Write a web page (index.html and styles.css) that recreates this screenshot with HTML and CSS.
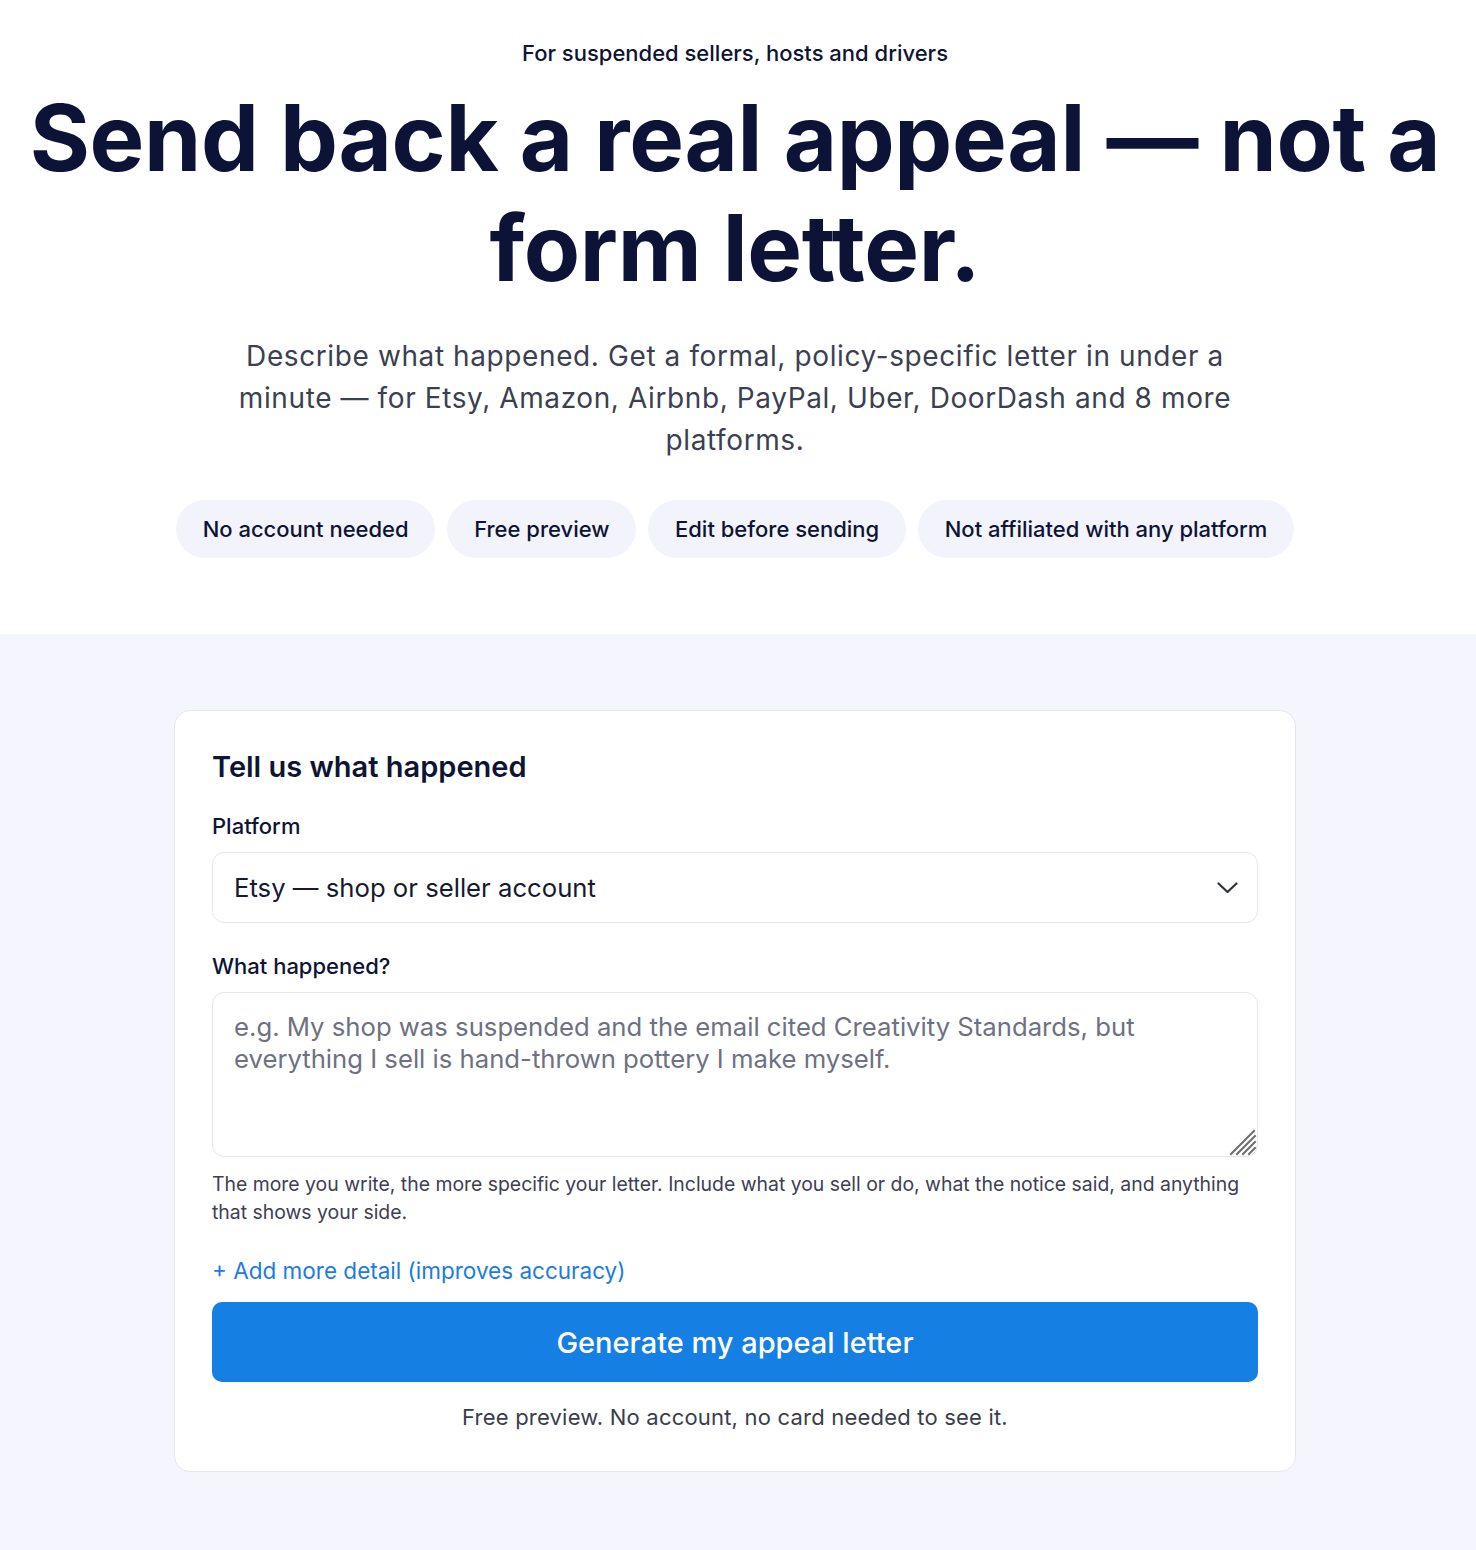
FILE: index.html
```html
<!DOCTYPE html>
<html lang="en">
<head>
    <meta charset="UTF-8">
    <meta name="viewport" content="width=device-width, initial-scale=1.0">
    <title>Appeal Letter Generator</title>
    <link rel="stylesheet" href="styles.css">
</head>
<body>

<section class="hero">
    <p class="eyebrow">For suspended sellers, hosts and drivers</p>
    <h1>Send back a real appeal — not a form letter.</h1>
    <p class="lead">Describe what happened. Get a formal, policy-specific letter in under a minute — for Etsy, Amazon, Airbnb, PayPal, Uber, DoorDash and 8 more platforms.</p>
    <ul class="pills">
        <li class="pill">No account needed</li>
        <li class="pill">Free preview</li>
        <li class="pill">Edit before sending</li>
        <li class="pill">Not affiliated with any platform</li>
    </ul>
</section>

<section class="form-section">
    <form class="card">
        <h2 class="card-title">Tell us what happened</h2>

        <label class="field-label" for="platform">Platform</label>
        <div class="select-wrap">
            <select id="platform" class="select-field">
                <option>Etsy — shop or seller account</option>
                <option>Amazon — seller account</option>
                <option>Airbnb — host account</option>
                <option>PayPal — account limitation</option>
                <option>Uber — driver account</option>
                <option>DoorDash — dasher account</option>
            </select>
            <svg class="chevron" width="21" height="12" viewBox="0 0 21 12" fill="none" stroke="currentColor" stroke-width="2.2" stroke-linecap="round" stroke-linejoin="round"><polyline points="1.5 1.5 10.5 10 19.5 1.5"></polyline></svg>
        </div>

        <label class="field-label" for="details">What happened?</label>
        <div class="textarea-wrap">
            <textarea id="details" class="text-field" placeholder="e.g. My shop was suspended and the email cited Creativity Standards, but everything I sell is hand-thrown pottery I make myself."></textarea>
            <svg class="grip" width="28" height="28" viewBox="0 0 28 28" stroke="#6e6e6e" stroke-width="2" stroke-linecap="square"><line x1="2" y1="26" x2="25" y2="3"></line><line x1="8" y1="26" x2="26" y2="8"></line><line x1="14" y1="26" x2="26" y2="14"></line><line x1="20" y1="26" x2="26" y2="20"></line></svg>
        </div>
        <p class="hint">The more you write, the more specific your letter. Include what you sell or do, what the notice said, and anything that shows your side.</p>

        <a href="#" class="add-detail">+ Add more detail (improves accuracy)</a>

        <button type="button" class="generate-btn">Generate my appeal letter</button>
        <p class="fine-print">Free preview. No account, no card needed to see it.</p>
    </form>
</section>

</body>
</html>
```

FILE: styles.css
```css
body {
    font-family: 'Inter', 'Noto Sans', sans-serif;
    margin: 0;
    color: #0e1434;
    background-color: #f5f5fd;
}
.hero {
    background-color: white;
    text-align: center;
    padding: 39px 26px 76px 20px;
}
.eyebrow {
    margin: 0;
    font-size: 22px;
    font-weight: 500;
    line-height: 28px;
}
h1 {
    margin: 16px 0 0;
    font-size: 92px;
    font-weight: 700;
    line-height: 110px;
    letter-spacing: -0.35px;
    color: #0c1337;
}
.lead {
    max-width: 1000px;
    margin: 32px auto 0;
    font-size: 28px;
    line-height: 42px;
    letter-spacing: 0.6px;
    color: #3b3f52;
}
.pills {
    list-style: none;
    padding: 0;
    margin: 39px 0 0;
    display: flex;
    justify-content: center;
    gap: 12px;
}
.pill {
    background-color: #f3f3fc;
    border-radius: 999px;
    padding: 0 26.75px;
    height: 58px;
    line-height: 58px;
    font-size: 22px;
    font-weight: 500;
    color: #0e1434;
}
.form-section {
    padding: 76px 26px 80px 20px;
}
.card {
    max-width: 1046px;
    margin: 0 auto;
    background-color: white;
    border: 1px solid #e6e6ef;
    border-radius: 16px;
    padding: 37px 37px 39px;
    display: flex;
    flex-direction: column;
}
.card-title {
    margin: 0 0 25px;
    font-size: 29px;
    font-weight: 600;
    line-height: 38px;
    color: #0e1434;
}
.field-label {
    font-size: 22px;
    font-weight: 500;
    line-height: 30px;
    margin-bottom: 11px;
}
.select-wrap {
    position: relative;
    margin-bottom: 28px;
}
.select-field {
    width: 100%;
    height: 71px;
    padding: 0 60px 0 21px;
    font-family: inherit;
    font-size: 25.7px;
    color: #161a2e;
    background-color: white;
    border: 1px solid #e5e7eb;
    border-radius: 12px;
    appearance: none;
    -webkit-appearance: none;
}
.chevron {
    position: absolute;
    right: 20px;
    top: 30px;
    color: #2c3045;
    pointer-events: none;
}
.textarea-wrap {
    position: relative;
    display: flex;
}
.text-field {
    flex: 1;
    height: 165px;
    padding: 18px 21px;
    font-family: inherit;
    font-size: 25.7px;
    line-height: 32px;
    color: #161a2e;
    border: 1px solid #e5e7eb;
    border-radius: 12px;
    box-sizing: border-box;
    resize: none;
}
.text-field::placeholder {
    color: #6d7182;
}
.grip {
    position: absolute;
    right: 1px;
    bottom: 1px;
    pointer-events: none;
}
.hint {
    margin: 13px 0 0;
    font-size: 19.4px;
    line-height: 28px;
    color: #3d4052;
}
.add-detail {
    margin-top: 30px;
    font-size: 22.5px;
    line-height: 30px;
    color: #1a7ce3;
    text-decoration: none;
    align-self: flex-start;
}
.generate-btn {
    margin-top: 16px;
    height: 80px;
    background-color: #157fe3;
    color: white;
    font-family: inherit;
    font-size: 29px;
    font-weight: 500;
    border: none;
    border-radius: 10px;
    cursor: pointer;
}
.generate-btn:hover {
    background-color: #0f6cc4;
}
.fine-print {
    margin: 20px 0 0;
    text-align: center;
    font-size: 22px;
    line-height: 30px;
    letter-spacing: 0.2px;
    color: #3a3d4b;
}
```
